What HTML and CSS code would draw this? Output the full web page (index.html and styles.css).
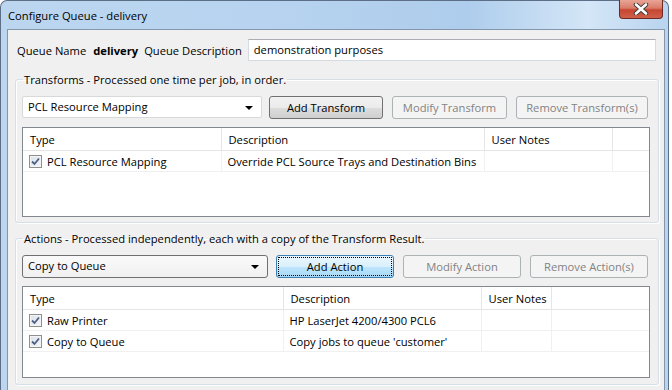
FILE: index.html
```
<!DOCTYPE html>
<html lang="en">
<head>
    <meta charset="UTF-8">
    <title>Configure Queue - delivery</title>
    <link rel="stylesheet" href="styles.css">
</head>
<body>
<div class="window">
    <div class="titlebar">
        <span class="title">Configure Queue - delivery</span>
        <div class="close">
            <svg width="18" height="12" viewBox="0 0 18 12">
                <path d="M4 1.5 L14 10.5 M14 1.5 L4 10.5" stroke="#3b3b3b" stroke-width="4.4" stroke-linecap="round"/>
                <path d="M4 1.5 L14 10.5 M14 1.5 L4 10.5" stroke="#ffffff" stroke-width="2.6" stroke-linecap="round"/>
            </svg>
        </div>
    </div>
    <div class="client">
        <div class="queue-row">
            <span>Queue Name</span>
            <b>delivery</b>
            <span>Queue Description</span>
            <div class="textbox">demonstration purposes</div>
        </div>

        <fieldset class="group group-transforms">
            <legend>Transforms - Processed one time per job, in order.</legend>
            <div class="toolbar">
                <div class="combo combo-light">PCL Resource Mapping<span class="arrow"></span></div>
                <button class="btn btn-add-t">Add Transform</button>
                <button class="btn btn-mod-t" disabled>Modify Transform</button>
                <button class="btn btn-rem-t" disabled>Remove Transform(s)</button>
            </div>
            <div class="list list-transforms">
                <table>
                    <colgroup>
                        <col style="width:198px"><col style="width:263px"><col style="width:128px"><col>
                    </colgroup>
                    <tr class="head"><th>Type</th><th>Description</th><th>User Notes</th><th></th></tr>
                    <tr>
                        <td><span class="check"><svg width="13" height="13" viewBox="0 0 13 13"><path d="M3 6.5 L5.5 9 L10 3.5" fill="none" stroke="#4c5f86" stroke-width="1.8"/></svg></span>PCL Resource Mapping</td>
                        <td>Override PCL Source Trays and Destination Bins</td>
                        <td></td><td></td>
                    </tr>
                </table>
            </div>
        </fieldset>

        <fieldset class="group group-actions">
            <legend>Actions - Processed independently, each with a copy of the Transform Result.</legend>
            <div class="toolbar">
                <div class="combo combo-dark">Copy to Queue<span class="arrow"></span></div>
                <button class="btn btn-focus btn-add-a">Add Action</button>
                <button class="btn btn-act" disabled>Modify Action</button>
                <button class="btn btn-act" disabled>Remove Action(s)</button>
            </div>
            <div class="list list-actions">
                <table>
                    <colgroup>
                        <col style="width:260px"><col style="width:198px"><col style="width:70px"><col>
                    </colgroup>
                    <tr class="head"><th>Type</th><th>Description</th><th>User Notes</th><th></th></tr>
                    <tr>
                        <td><span class="check"><svg width="13" height="13" viewBox="0 0 13 13"><path d="M3 6.5 L5.5 9 L10 3.5" fill="none" stroke="#4c5f86" stroke-width="1.8"/></svg></span>Raw Printer</td>
                        <td>HP LaserJet 4200/4300 PCL6</td>
                        <td></td><td></td>
                    </tr>
                    <tr>
                        <td><span class="check"><svg width="13" height="13" viewBox="0 0 13 13"><path d="M3 6.5 L5.5 9 L10 3.5" fill="none" stroke="#4c5f86" stroke-width="1.8"/></svg></span>Copy to Queue</td>
                        <td>Copy jobs to queue 'customer'</td>
                        <td></td><td></td>
                    </tr>
                </table>
            </div>
        </fieldset>
    </div>
</div>
</body>
</html>
```

FILE: styles.css
```
body {
    margin: 0;
    background: #ffffff;
    font-family: "Open Sans", "Noto Sans", sans-serif;
    font-size: 11.2px;
    color: #000;
    overflow: hidden;
}
.window {
    width: 667px;
    height: 400px;
    border: 1px solid #5d6f86;
    border-bottom: none;
    border-radius: 7px 7px 0 0;
    background: linear-gradient(to right, #bcd6f0 0%, #b7d3ef 40%, #aecdec 70%, #d4e6f7 88%, #b9d4ef 100%);
}
.titlebar {
    height: 28px;
    display: flex;
    justify-content: space-between;
    align-items: flex-start;
    padding-left: 7px;
}
.title {
    margin-top: 6px;
    line-height: 17px;
    font-size: 11.2px;
}
.close {
    width: 42px;
    height: 18px;
    margin-right: 5px;
    margin-top: -1px;
    border: 1px solid #6e2a24;
    border-top: none;
    border-radius: 0 0 4px 4px;
    background: linear-gradient(#e8a597 0%, #da7c69 45%, #c74631 55%, #d0604b 100%);
    display: flex;
    align-items: center;
    justify-content: center;
}
.client {
    margin-left: 6px;
    margin-right: 3px;
    height: 400px;
    background: #f0f0f0;
    border: 1px solid #8496ab;
}
.queue-row {
    display: flex;
    align-items: center;
    padding: 9px 8px 0 9px;
    height: 22px;
}
.queue-row b {
    margin: 0 6px 0 7px;
}
.textbox {
    flex: 1;
    margin-left: 6px;
    height: 20px;
    line-height: 20px;
    padding-left: 5px;
    background: #fff;
    border: 1px solid #d6dbe1;
    border-top-color: #abadb3;
}
.group {
    margin: 10px 5px 0 7px;
    padding: 8px 8px 5px 6px;
    border: 1px solid #d5dfe5;
    border-radius: 3px;
    box-shadow: inset 1px 1px 0 #fff, 1px 1px 0 #fff;
}
.group legend {
    padding: 0 1px;
    margin-left: 1px;
    line-height: 17px;
}
.group-actions {
    margin-top: 7px;
    padding-bottom: 6px;
}
.toolbar {
    display: flex;
    gap: 9px;
    height: 23px;
    margin-bottom: 8px;
}
.combo {
    position: relative;
    box-sizing: border-box;
    height: 22px;
    line-height: 20px;
    padding-left: 5px;
    background: #fff;
    border: 1px solid #d9d9d9;
    border-radius: 2px;
}
.combo-light {
    width: 240px;
    margin-right: -2px;
}
.combo-dark {
    width: 246px;
    height: 23px;
    margin-right: -1px;
    border-color: #707070;
    border-radius: 3px;
    background: linear-gradient(#fafafa, #f0f0f0);
}
.arrow {
    position: absolute;
    right: 8px;
    top: 9px;
    border-left: 4px solid transparent;
    border-right: 4px solid transparent;
    border-top: 4px solid #000;
}
.btn {
    box-sizing: border-box;
    height: 23px;
    font-family: inherit;
    font-size: 11.2px;
    padding: 0;
    color: #000;
    border: 1px solid #707070;
    border-radius: 3px;
    background: linear-gradient(#f2f2f2 0%, #ebebeb 50%, #dddddd 51%, #cfcfcf 100%);
}
.btn:disabled {
    color: #838383;
    border-color: #adb2b5;
    background: #f4f4f4;
}
.btn-add-t { width: 114px; }
.btn-mod-t { width: 115px; }
.btn-rem-t { width: 132px; }
.btn-add-a { width: 118px; }
.btn-act { width: 118px; }
.btn-focus {
    border-color: #3c7fb1;
    background: linear-gradient(#eaf6fd 0%, #d9f0fc 50%, #bee6fd 51%, #a7d9f5 100%);
    outline: 1px dotted #000;
    outline-offset: -3px;
}
.list {
    background: #fff;
    border: 1px solid #828790;
    overflow: hidden;
}
.list-transforms { height: 88px; }
.list-actions { height: 90px; }
.list table {
    width: 100%;
    table-layout: fixed;
    border-collapse: collapse;
}
.list th {
    height: 22px;
    padding: 0 0 0 7px;
    font-weight: normal;
    text-align: left;
    white-space: nowrap;
    border-right: 1px solid #e5e5e5;
    border-bottom: 1px solid #e5e5e5;
}
.list td {
    height: 20px;
    padding: 0 0 0 6px;
    white-space: nowrap;
    overflow: hidden;
    border-right: 1px solid #f0f0f0;
    border-bottom: 1px solid #f0f0f0;
}
.list th:last-child, .list td:last-child {
    border-right: none;
}
.check {
    display: inline-block;
    vertical-align: -2px;
    width: 11px;
    height: 11px;
    margin-right: 5px;
    border: 1px solid #8e8f8f;
    background: linear-gradient(135deg, #dbe2ea, #f4f6f9);
    box-shadow: inset 0 0 0 1px #f4f4f4;
}
.check svg {
    display: block;
    margin: -1px;
}
```
